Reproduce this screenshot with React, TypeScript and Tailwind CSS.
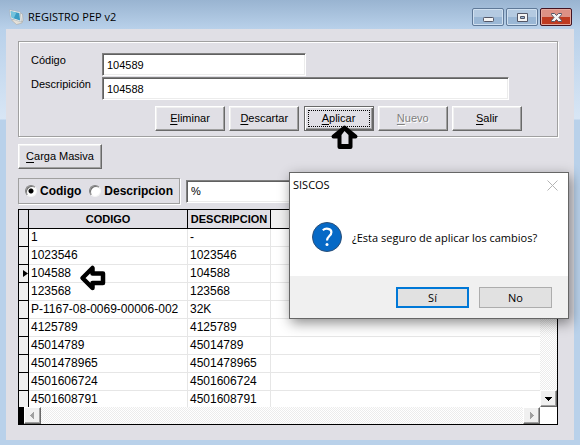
import React from "react";

const rows: [string, string][] = [
  ["1", "-"],
  ["1023546", "1023546"],
  ["104588", "104588"],
  ["123568", "123568"],
  ["P-1167-08-0069-00006-002", "32K"],
  ["4125789", "4125789"],
  ["45014789", "45014789"],
  ["4501478965", "4501478965"],
  ["4501606724", "4501606724"],
  ["4501608791", "4501608791"],
];

const raised =
  "border border-t-white border-l-white border-r-[#696969] border-b-[#696969] shadow-[inset_-1px_-1px_0_#a0a0a0,inset_1px_1px_0_#f0f0f0]";
const sunken =
  "border border-t-[#808080] border-l-[#808080] border-r-white border-b-white bg-white shadow-[inset_1px_1px_0_#606060,inset_-1px_-1px_0_#ececec] px-1 outline-none";
const dither =
  "bg-[repeating-conic-gradient(#ececec_0_25%,#ffffff_0_50%)] bg-[length:2px_2px]";

function FormButton({ hotkey, rest, state }: { hotkey: string; rest: string; state?: "focus" | "disabled" }) {
  const look =
    state === "focus"
      ? "border border-[#696969] shadow-[inset_1px_1px_0_#fff,inset_-1px_-1px_0_#696969,inset_-2px_-2px_0_#a0a0a0]"
      : raised;
  return (
    <button
      type="button"
      disabled={state === "disabled"}
      className={`flex h-[25px] w-[70px] items-center justify-center p-[3px] ${look} ${
        state === "disabled" ? "text-[#808080] [text-shadow:1px_1px_0_#fff]" : ""
      }`}
    >
      <span
        className={`flex h-full w-full items-center justify-center ${
          state === "focus" ? "border border-dotted border-black" : ""
        }`}
      >
        <u className="underline-offset-2">{hotkey}</u>
        {rest}
      </span>
    </button>
  );
}

function ScrollButton({ label, points, color }: { label: string; points: string; color: string }) {
  return (
    <button aria-label={label} className={`flex size-[17px] shrink-0 items-center justify-center bg-[#f0f0f0] ${raised}`}>
      <svg width="9" height="9" viewBox="0 0 9 9" shapeRendering="crispEdges">
        <polygon points={points} fill={color} />
      </svg>
    </button>
  );
}

function TitleBar() {
  const glass =
    "flex h-[18px] w-8 items-center justify-center rounded-[2px] border border-[#5f7998] bg-linear-to-b from-[#b4cae1] from-50% to-[#9ab7d5] to-50% shadow-[inset_0_0_0_1px_#d0e0f0]";
  return (
    <header className="flex h-[29px] shrink-0 items-center bg-linear-to-b from-[#99b4d1] to-[#b9d1ea] pt-[5px] pr-2 pl-[9px]">
      <svg width="15" height="16" viewBox="0 0 15 16" className="mr-1">
        <path d="M2.500 11l5 4.500 5.500-1.500.5-2-4-2z" fill="#e4e0d8" stroke="#a8a49c" strokeWidth=".5" />
        <path d="M11 4l2.500 1 .5 7-2 1z" fill="#eceae4" stroke="#9b9b9b" strokeWidth=".5" />
        <path d="M.4.800l11 2.200.8 10-10.500-3.500z" fill="#f5f4ef" stroke="#9aa6b0" strokeWidth=".5" />
        <path d="M1.600 2.200l8.800 1.800.7 7.600-8.400-2.800z" fill="#3a9cc4" />
        <path d="M1.600 2.200l5.800 1.200-2.700 6-2-.6z" fill="#74c3dd" />
      </svg>
      <h1 className="flex-1 font-['Open_Sans','Noto_Sans',sans-serif] text-[11px] leading-4">REGISTRO PEP v2</h1>
      <div className="flex gap-[2px]">
        <button aria-label="Minimizar" className={glass}>
          <svg width="11" height="10" viewBox="0 0 11 10"><rect x=".5" y="5.500" width="10" height="4" rx=".8" fill="#f4f4f4" stroke="#535666" /></svg>
        </button>
        <button aria-label="Maximizar" className={glass}>
          <svg width="11" height="9" viewBox="0 0 11 9"><path fillRule="evenodd" d="M.5.5h10v8H.5zM3.500 3.500h4v2h-4z" fill="#f4f4f4" stroke="#535666" /></svg>
        </button>
        <button aria-label="Cerrar" className="flex h-[18px] w-8 items-center justify-center rounded-[2px] border border-[#431422] bg-linear-to-b from-[#dd9185] from-50% to-[#bf3b21] to-50% shadow-[inset_0_0_0_1px_#e5a89c]">
          <svg width="11" height="9" viewBox="0 0 11 9"><path d="M.5.5h3l2 1.900 2-1.900h3v1.200L8 4.500l2.500 2.800v1.200h-3l-2-1.900-2 1.900h-3V7.300L3 4.500.5 1.700z" fill="#f4f4f4" stroke="#535666" strokeLinejoin="round" /></svg>
        </button>
      </div>
    </header>
  );
}

function RecordForm() {
  return (
    <form className="border border-[#a0a0a0] px-3 pt-[11px] pb-[5px] shadow-[inset_1px_1px_0_#fff,1px_1px_0_#fff]">
      <div className="flex">
        <label htmlFor="codigo" className="w-[71px] shrink-0 leading-[14px]">Código</label>
        <input id="codigo" defaultValue="104589" className={`h-[23px] w-[204px] ${sunken}`} />
      </div>
      <div className="mt-px flex">
        <label htmlFor="descripcion" className="w-[71px] shrink-0 leading-[14px]">Descripición</label>
        <input id="descripcion" defaultValue="104588" className={`mr-9 h-[23px] min-w-0 flex-1 ${sunken}`} />
      </div>
      <div className="mt-[6px] mr-[23px] ml-[124px] flex justify-between">
        <FormButton hotkey="E" rest="liminar" />
        <FormButton hotkey="D" rest="escartar" />
        <FormButton hotkey="A" rest="plicar" state="focus" />
        <FormButton hotkey="N" rest="uevo" state="disabled" />
        <FormButton hotkey="S" rest="alir" />
      </div>
    </form>
  );
}

function SearchBar() {
  const radio =
    "size-3 appearance-none rounded-full border border-t-[#808080] border-l-[#808080] border-r-[#f4f4f4] border-b-[#f4f4f4] bg-white shadow-[inset_1px_1px_0_#707070] checked:bg-[radial-gradient(circle,#000_2px,#fff_3px)]";
  return (
    <div className="mt-[9px] flex items-center">
      <div className="flex h-[26px] w-[162px] items-center gap-2 border border-[#a0a0a0] px-[6px] text-[12px] font-bold shadow-[1px_1px_0_#fff]">
        <label className="flex items-center gap-[3px]">
          <input type="radio" name="campo" defaultChecked className={radio} />Codigo
        </label>
        <label className="flex items-center gap-[3px]">
          <input type="radio" name="campo" className={radio} />Descripcion
        </label>
      </div>
      <input aria-label="Buscar" defaultValue="%" className={`ml-[6px] h-[23px] min-w-0 flex-1 ${sunken}`} />
    </div>
  );
}

function DataGrid() {
  const head = "h-[19px] border-b border-r border-black p-0 text-[11px] font-bold bg-[#e0dfe5]";
  const cell = "h-[18px] border-b border-r border-[#e6e6e6] p-0 pl-[2px] text-left whitespace-nowrap";
  return (
    <div className="mt-[5px] border border-black bg-white text-[12px] leading-[17px]">
      <div className="flex h-[197px]">
        <div className="min-w-0 flex-1 overflow-hidden">
          <table className="w-full table-fixed border-separate border-spacing-0">
            <colgroup>
              <col className="w-[10px]" />
              <col className="w-[159px]" />
              <col className="w-[83px]" />
              <col />
            </colgroup>
            <thead>
              <tr>
                <th className={head} />
                <th className={head}>CODIGO</th>
                <th className={head}>DESCRIPCION</th>
                <th className="border-b border-black bg-[#f0f0f0] p-0" />
              </tr>
            </thead>
            <tbody>
              {rows.map(([code, text]) => (
                <tr key={code}>
                  <td className="h-[18px] border-r border-b border-black bg-[#f0f0f0] p-0">
                    {code === "104588" && (
                      <svg width="5" height="7" viewBox="0 0 5 7" className="ml-1"><path d="M0 0l5 3.500L0 7z" /></svg>
                    )}
                  </td>
                  <td className={cell}>{code}</td>
                  <td className={cell}>{text}</td>
                  <td className="border-b border-[#e6e6e6] p-0" />
                </tr>
              ))}
            </tbody>
          </table>
        </div>
        <div className={`flex w-[17px] flex-col justify-end ${dither}`}>
          <ScrollButton label="Bajar" points="1,3 8,3 4.500,7" color="#000" />
        </div>
      </div>
      <div className="flex h-[17px]">
        <div className="w-[5px] bg-black" />
        <div className={`mr-[17px] flex flex-1 justify-between ${dither}`}>
          <ScrollButton label="Izquierda" points="6,1 6,8 2,4.500" color="#a0a0a0" />
          <ScrollButton label="Derecha" points="3,1 3,8 7,4.500" color="#a0a0a0" />
        </div>
      </div>
    </div>
  );
}

function ConfirmDialog() {
  return (
    <div
      role="dialog"
      aria-label="SISCOS"
      className="absolute top-[172px] left-[289px] w-[280px] border border-[#666] bg-white font-['Open_Sans','Noto_Sans',sans-serif] text-[11px] shadow-[2px_4px_12px_rgba(0,0,0,0.45)]"
    >
      <div className="flex h-6 items-center justify-between pr-[10px] pl-[3px]">
        <h2>SISCOS</h2>
        <button aria-label="Cerrar">
          <svg width="11" height="11" viewBox="0 0 11 11"><path d="M.5.5l10 10M10.500.5l-10 10" stroke="#b4b4b4" /></svg>
        </button>
      </div>
      <div className="flex h-[79px] items-center gap-[10px] pl-[22px]">
        <svg width="30" height="30" viewBox="0 0 30 30">
          <circle cx="15" cy="15" r="14.500" fill="#0669c6" stroke="#2b4f78" />
          <path d="M10.800 8.200C13.500 5.800 19.400 6.200 19.400 10.300C19.400 14 15 14.200 15 18.600" fill="none" stroke="#fff" strokeWidth="2.200" />
          <circle cx="15" cy="22.500" r="1.500" fill="#fff" />
        </svg>
        <p className="pt-1 whitespace-nowrap">¿Esta seguro de aplicar los cambios?</p>
      </div>
      <div className="flex justify-end gap-[10px] bg-[#f0f0f0] pt-[11px] pr-4 pb-[10px]">
        <button className="h-[21px] w-[73px] border-2 border-[#0078d7] bg-[#e1e1e1] leading-4">Sí</button>
        <button className="h-[21px] w-[73px] border border-[#adadad] bg-[#e1e1e1] leading-4">No</button>
      </div>
    </div>
  );
}

export default function App() {
  return (
    <div className="relative flex min-h-screen flex-col bg-[#b9d1ea] bg-[linear-gradient(#b9d1ea_30px,#d8e6f5_119px,#b9d1ea_120px)] text-black">
      <TitleBar />
      <main className="mr-[6px] mb-[5px] ml-[6px] flex-1 bg-[#e0dfe5] pt-3 pr-4 pb-[15px] pl-3 font-['Liberation_Sans',Arial,sans-serif] text-[11px]">
        <RecordForm />
        <button className={`mt-[7px] block h-[25px] w-[84px] ${raised}`}>
          <u className="underline-offset-2">C</u>arga Masiva
        </button>
        <SearchBar />
        <DataGrid />
      </main>
      <svg className="absolute top-[124px] left-[330px]" width="29" height="26" viewBox="0 0 29 26">
        <path d="M14.500 3.500L25.500 12.500h-5v10.500h-11V12.500h-6z" fill="#000" stroke="#000" strokeWidth="4" strokeLinejoin="round" />
        <path d="M14.500 7l4 4v9h-7v-9z" fill="#e0dfe5" />
      </svg>
      <svg className="absolute top-[264px] left-[79px]" width="28" height="28" viewBox="0 0 28 28">
        <path d="M3.500 14L13.500 4v5.500h10.500v9.500H13.500v5z" fill="#fff" stroke="#000" strokeWidth="4.500" strokeLinejoin="round" />
      </svg>
      <ConfirmDialog />
    </div>
  );
}
